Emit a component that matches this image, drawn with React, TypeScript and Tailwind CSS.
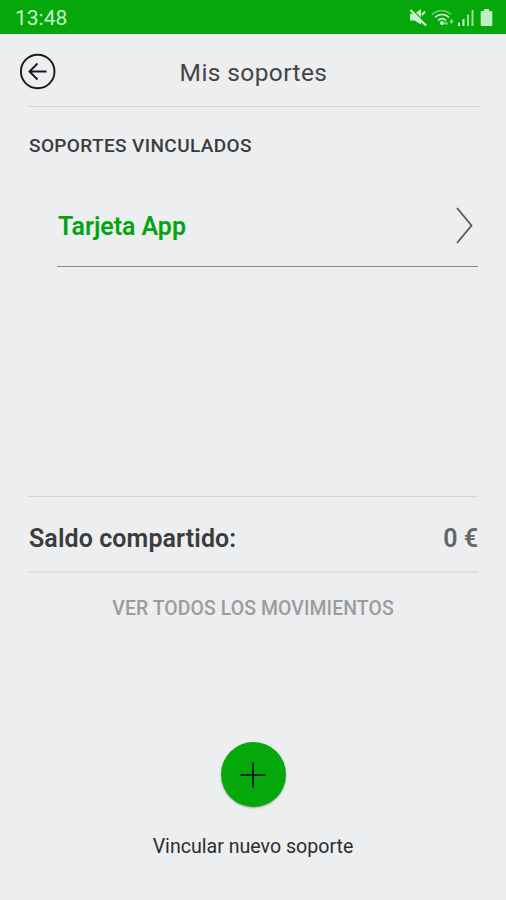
function StatusIcons() {
  return (
    <svg width="90" height="24" viewBox="0 0 90 24" className="text-[#c9f3c9]" fill="currentColor">
      {/* muted speaker */}
      <path d="M6 9h4l7-5v15.500l-6.500-4H6z" />
      <path d="M8 4.500 22.500 19" stroke="#04a80b" strokeWidth="1.500" />
      <path d="M6.500 5 22 20.500" stroke="currentColor" strokeWidth="2.200" />
      <path d="m18 10 3-3.500" stroke="currentColor" strokeWidth="2" />
      {/* wifi */}
      <g fill="none" stroke="currentColor" strokeWidth="1.600">
        <path d="M28 9.500c5-5 14-5 19 0" opacity="0.55" />
        <path d="M31 12.500c4-4 10-4 14 0" />
        <path d="M34 15.500c2.500-2.300 5.500-2.300 8 0" />
      </g>
      <circle cx="38" cy="18" r="2" />
      <path d="m42 16 2.500 3.500h-5zM47.500 13.500l2 3-2 3-2-3z" opacity="0.6" />
      {/* signal */}
      <path d="M54 17.500h2V21h-2zM58.500 14h2v7h-2z" />
      <path d="M63 9.500h2V21h-2zM67.500 5h2v16h-2z" opacity="0.75" />
      {/* battery */}
      <path d="M80 4h5v2h2.300q1 0 1 1v13q0 1-1 1h-9.600q-1 0-1-1V7q0-1 1-1h2.300z" opacity="0.95" />
    </svg>
  );
}

function StatusBar() {
  return (
    <div className="flex h-[34px] items-center justify-between bg-[#04a80b] pr-[12px] pl-[15px]">
      <span className="pt-px text-[21px] leading-[34px] text-[#c9f3c9]">13:48</span>
      <StatusIcons />
    </div>
  );
}

function Header() {
  return (
    <header className="mr-[27px] ml-[28px] grid h-[73px] grid-cols-[40px_1fr_40px] items-center border-b border-[#d2d3d5]">
      <button type="button" aria-label="Volver" className="-ml-[9px] size-[37px] pt-px">
        <svg width="37" height="37" viewBox="0 0 37 37" fill="none" stroke="#17181c" strokeWidth="1.900">
          <circle cx="18.700" cy="18.500" r="16.800" />
          <path d="M27.500 18.500H11M18.500 10.500l-8 8 8 8" />
        </svg>
      </button>
      <h1 className="pt-[6px] text-center text-[24.500px] leading-8 tracking-[0.400px] text-[#454547]">
        Mis soportes
      </h1>
    </header>
  );
}

function SoporteRow({ name }: { name: string }) {
  return (
    <button
      type="button"
      className="ml-[57px] flex h-[82px] w-[421px] items-center justify-between border-b border-[#858687] pr-[3px] text-left"
    >
      <span className="pt-[2px] pl-[1px] text-[25px] font-semibold tracking-[-0.050px] text-[#04a510]">
        {name}
      </span>
      <svg width="20" height="40" viewBox="0 0 20 40" fill="none" stroke="#55565a" strokeWidth="1.800">
        <path d="M2 2 16.500 19.500 2 37" />
      </svg>
    </button>
  );
}

function Saldo() {
  return (
    <div className="mx-7 flex h-[77px] items-center justify-between border-t border-b-2 border-t-[#d6d7d9] border-b-[#dfe0e2] pt-[10px] text-[25px] font-semibold">
      <span className="pl-px tracking-[0.100px] text-[#3b3c3e]">Saldo compartido:</span>
      <span className="text-[#646567]">0 €</span>
    </div>
  );
}

export default function App() {
  return (
    <div className="flex h-[900px] w-full flex-col overflow-hidden bg-[#edeef0] font-['Roboto',sans-serif]">
      <StatusBar />
      <Header />
      <h2 className="mt-[25px] ml-[29px] text-[19px] leading-7 font-medium tracking-[0.380px] text-[#3b3c3e]">
        SOPORTES VINCULADOS
      </h2>
      <div className="mt-[25px] mb-[229px]">
        <SoporteRow name="Tarjeta App" />
      </div>
      <Saldo />
      <button
        type="button"
        className="mt-[22px] self-center text-[19.400px] leading-7 font-medium tracking-[0.100px] text-[#9b9c9e]"
      >
        VER TODOS LOS MOVIMIENTOS
      </button>
      <button
        type="button"
        aria-label="Vincular nuevo soporte"
        className="mt-[119px] flex size-[65px] items-center justify-center self-center rounded-full bg-[#04a80b] shadow-[0_1px_2px_rgba(0,0,0,0.3)]"
      >
        <svg width="26" height="26" viewBox="0 0 26 26" stroke="#102610" strokeWidth="2">
          <path d="M13 0.500v25M0.500 13h25" />
        </svg>
      </button>
      <p className="mt-[26px] text-center text-[19.600px] leading-7 text-[#2c2d2f]">Vincular nuevo soporte</p>
    </div>
  );
}
